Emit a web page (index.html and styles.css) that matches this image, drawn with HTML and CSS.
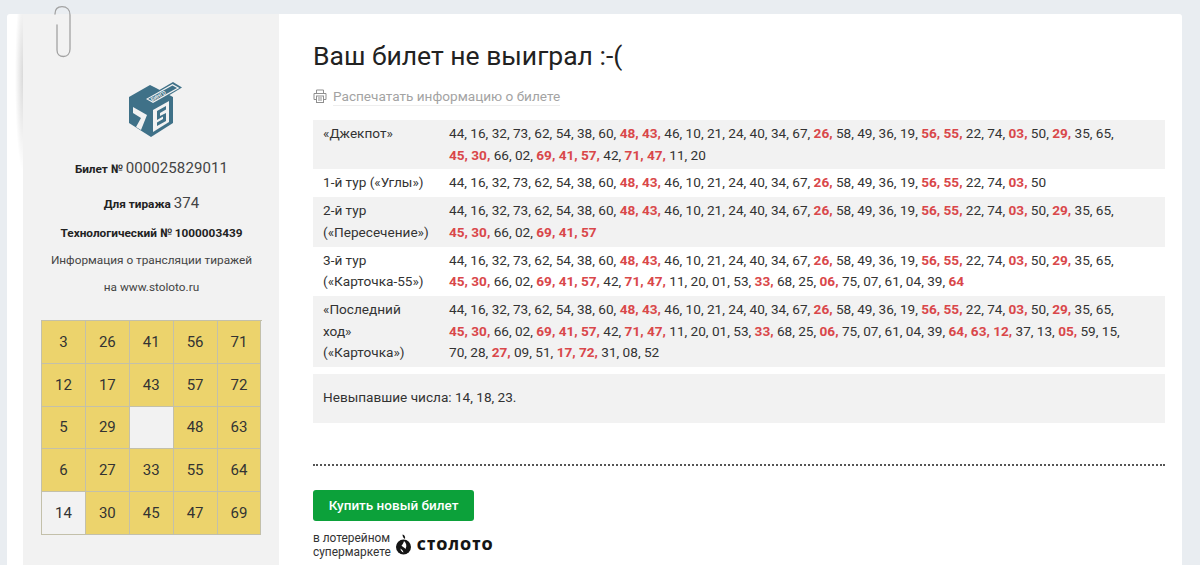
FILE: index.html
```html
<!DOCTYPE html>
<html lang="en">

<head>
    <meta charset="UTF-8">
    <meta name="viewport" content="width=device-width, initial-scale=1.0">
    <title>Ваш билет не выиграл</title>
    <link rel="stylesheet" href="styles.css">
</head>

<body>
    <div class="page">
        <div class="ticket">
            <svg class="clip" width="18" height="52" viewBox="0 0 18 52">
                <path d="M1 8 C1 3 4 0.7 8 0.7 C13 0.7 16 4 16 9 V43 C16 48 13 50.5 9.5 50.5 C5.5 50.5 3 48 3 44 V19" fill="none" stroke="#a2a2a2" stroke-width="1.3" stroke-linecap="round"/>
            </svg>
            <svg class="logo" width="56" height="56" viewBox="8 6 56 56">
                <path d="M9 21 L30 9 L36 12 L53 21 V47 L31 61 L9 47 Z" fill="#3f7188"/>
                <path d="M24 23 L53 6 L62 11.5 L33 29 Z" fill="#3f7188"/>
                <path d="M26 23 L52.5 8 L59.5 12 L33 27 Z" fill="#f2f2f2"/>
                <path d="M28 23 L52.5 9.5 L57 12 L33 25.5 Z" fill="#3f7188"/>
                <text class="logo-tag" x="32" y="25.5" transform="rotate(-29 32 25.5)">БИНГО</text>
                <path d="M33 34 L49 25 V46 L33 56 Z" fill="#f2f2f2"/>
                <path d="M37 35 L46 30 V33.5 L40 37 V40 L46 37 V45 L37 50 V46.5 L43 43 V40.5 L37 44 Z" fill="#3f7188"/>
                <path d="M13 31 L27 39 L21 54 L16 51 L21 42 L13 37 Z" fill="#f2f2f2"/>
            </svg>
            <p class="info first"><b>Билет №</b> <span class="big">000025829011</span></p>
            <p class="info draw"><b>Для тиража</b> <span class="big">374</span></p>
            <p class="info"><b>Технологический № 1000003439</b></p>
            <p class="info">Информация о трансляции тиражей</p>
            <p class="info">на www.stoloto.ru</p>
            <div class="grid">
                <div class="hit">3</div><div class="hit">26</div><div class="hit">41</div><div class="hit">56</div><div class="hit">71</div>
                <div class="hit">12</div><div class="hit">17</div><div class="hit">43</div><div class="hit">57</div><div class="hit">72</div>
                <div class="hit">5</div><div class="hit">29</div><div></div><div class="hit">48</div><div class="hit">63</div>
                <div class="hit">6</div><div class="hit">27</div><div class="hit">33</div><div class="hit">55</div><div class="hit">64</div>
                <div>14</div><div class="hit">30</div><div class="hit">45</div><div class="hit">47</div><div class="hit">69</div>
            </div>
        </div>

        <div class="main">
            <h1>Ваш билет не выиграл :-(</h1>
            <div class="print">
                <svg width="14" height="14" viewBox="0 0 14 14" fill="none" stroke="#8f8f8f" stroke-width="1">
                    <path d="M3.5 4 V1 H10.5 V4 M3 10.5 H1 V4.5 H13 V10.5 H11"/>
                    <rect x="3.5" y="7" width="7" height="6.5"/>
                    <path d="M5 9 H9 M5 11 H9"/>
                </svg>
                <span class="print-link">Распечатать информацию о билете</span>
            </div>

            <table class="tours">
                <tr class="odd">
                    <td class="name">«Джекпот»</td>
                    <td>44, 16, 32, 73, 62, 54, 38, 60, <b>48, 43,</b> 46, 10, 21, 24, 40, 34, 67, <b>26,</b> 58, 49, 36, 19, <b>56, 55,</b> 22, 74, <b>03,</b> 50, <b>29,</b> 35, 65,<br><b>45, 30,</b> 66, 02, <b>69, 41, 57,</b> 42, <b>71, 47,</b> 11, 20</td>
                </tr>
                <tr>
                    <td class="name">1-й тур («Углы»)</td>
                    <td>44, 16, 32, 73, 62, 54, 38, 60, <b>48, 43,</b> 46, 10, 21, 24, 40, 34, 67, <b>26,</b> 58, 49, 36, 19, <b>56, 55,</b> 22, 74, <b>03,</b> 50</td>
                </tr>
                <tr class="odd">
                    <td class="name">2-й тур («Пересечение»)</td>
                    <td>44, 16, 32, 73, 62, 54, 38, 60, <b>48, 43,</b> 46, 10, 21, 24, 40, 34, 67, <b>26,</b> 58, 49, 36, 19, <b>56, 55,</b> 22, 74, <b>03,</b> 50, <b>29,</b> 35, 65,<br><b>45, 30,</b> 66, 02, <b>69, 41, 57</b></td>
                </tr>
                <tr>
                    <td class="name">3-й тур («Карточка-55»)</td>
                    <td>44, 16, 32, 73, 62, 54, 38, 60, <b>48, 43,</b> 46, 10, 21, 24, 40, 34, 67, <b>26,</b> 58, 49, 36, 19, <b>56, 55,</b> 22, 74, <b>03,</b> 50, <b>29,</b> 35, 65,<br><b>45, 30,</b> 66, 02, <b>69, 41, 57,</b> 42, <b>71, 47,</b> 11, 20, 01, 53, <b>33,</b> 68, 25, <b>06,</b> 75, 07, 61, 04, 39, <b>64</b></td>
                </tr>
                <tr class="odd">
                    <td class="name">«Последний<br>ход»<br>(«Карточка»)</td>
                    <td>44, 16, 32, 73, 62, 54, 38, 60, <b>48, 43,</b> 46, 10, 21, 24, 40, 34, 67, <b>26,</b> 58, 49, 36, 19, <b>56, 55,</b> 22, 74, <b>03,</b> 50, <b>29,</b> 35, 65,<br><b>45, 30,</b> 66, 02, <b>69, 41, 57,</b> 42, <b>71, 47,</b> 11, 20, 01, 53, <b>33,</b> 68, 25, <b>06,</b> 75, 07, 61, 04, 39, <b>64, 63, 12,</b> 37, 13, <b>05,</b> 59, 15,<br>70, 28, <b>27,</b> 09, 51, <b>17, 72,</b> 31, 08, 52</td>
                </tr>
            </table>

            <div class="missed">Невыпавшие числа: 14, 18, 23.</div>

            <div class="dots"></div>

            <button class="buy" type="button">Купить новый билет</button>

            <div class="market">
                <span class="market-text">в лотерейном<br>супермаркете</span>
                <svg width="15" height="21" viewBox="0 0 15 21">
                    <circle cx="7.5" cy="13" r="7.5" fill="#151515"/>
                    <path d="M6.5 0.5 C8.5 1 9.5 2.5 9 5 C7.5 4.5 6.5 2.5 6.5 0.5 Z" fill="#151515"/>
                    <path d="M8 7 C10.5 9 11 12 9.5 15 C8.5 13 6.5 13.5 5.5 11.5 C6.5 11 7.5 9 8 7 Z M4.5 14.5 C5.5 15.5 7 16 7.5 18.5 C6 18 4.5 16.5 4.5 14.5 Z" fill="#fff"/>
                </svg>
                <span class="brand">СТОЛОТО</span>
            </div>
        </div>
    </div>
</body>

</html>
```

FILE: styles.css
```css
* {
    box-sizing: border-box;
}

body {
    margin: 0;
    height: 565px;
    overflow: hidden;
    background-color: #e9edf1;
    font-family: Roboto, "Liberation Sans", sans-serif;
    font-size: 13.6px;
    color: #333;
}

.page {
    display: flex;
    width: 1175px;
    height: 551px;
    margin: 14px 0 0 7px;
    padding-left: 16px;
    background-color: #fff;
    border-radius: 3px 3px 0 0;
}

/* left ticket column */
.ticket {
    position: relative;
    flex: 0 0 256px;
    padding: 68px 17px 0 18px;
    background-color: #f2f2f2;
    text-align: center;
}

/* curled paper shadow */
.ticket::before {
    content: "";
    position: absolute;
    top: 0;
    left: -8px;
    width: 8px;
    height: 165px;
    background: radial-gradient(ellipse 8px 95px at 100% 62px, rgba(0, 0, 0, 0.15), rgba(0, 0, 0, 0));
}

.clip {
    position: absolute;
    top: -8px;
    left: 31px;
}

.logo {
    display: block;
    margin: 0 0 17px 87px;
}

.logo-tag {
    font-size: 5px;
    font-weight: 700;
    fill: #f2f2f2;
}

.info {
    margin: 0;
    height: 27px;
    line-height: 27px;
    font-size: 11.8px;
    color: #444;
    white-space: nowrap;
}

.info.first {
    margin-bottom: 8px;
}

.info.draw {
    margin-bottom: 3px;
}

.info b {
    color: #222;
    font-weight: 700;
}

.big {
    font-size: 15px;
    letter-spacing: 0.1px;
    color: #444;
}

.grid {
    display: grid;
    grid-template-columns: repeat(5, 43.9px);
    grid-auto-rows: 42.8px;
    width: 220.5px;
    margin-top: 19px;
    border-top: 1px solid #c3c0aa;
    border-left: 1px solid #c3c0aa;
}

.grid div {
    display: flex;
    align-items: center;
    justify-content: center;
    border-right: 1px solid #c3c0aa;
    border-bottom: 1px solid #c3c0aa;
    font-size: 15px;
    color: #333;
}

.grid .hit {
    background-color: #ecd36c;
}

/* right part */
.main {
    flex: 1;
    padding: 25px 17px 0 34px;
}

h1 {
    margin: 0;
    font-size: 26.5px;
    font-weight: 400;
    line-height: 34px;
    color: #222;
}

.print {
    display: flex;
    align-items: center;
    gap: 6px;
    margin-top: 13px;
    height: 20px;
    color: #a3a3a3;
}

.print-link {
    border-bottom: 1px solid #eee;
    line-height: 18px;
}

.tours {
    width: 100%;
    margin-top: 14px;
    border-collapse: collapse;
    line-height: 21.5px;
    table-layout: fixed;
}

.tours td {
    padding: 3px 0 3.4px;
    vertical-align: top;
}

.tours .name {
    width: 136px;
    padding-left: 10px;
    padding-right: 10px;
}

.tours tr.odd {
    background-color: #f2f2f2;
}

.tours b {
    color: #d9474a;
    font-weight: 700;
}

.missed {
    height: 49px;
    margin-top: 7px;
    padding: 13px 10px 0;
    line-height: 21px;
    background-color: #f2f2f2;
}

.dots {
    margin-top: 41px;
    border-top: 2px dotted #555;
}

.buy {
    display: block;
    width: 161px;
    height: 31px;
    margin-top: 24px;
    padding: 0;
    background-color: #0ca13a;
    border: 0;
    border-radius: 3px;
    color: #fff;
    font-family: inherit;
    font-size: 13.5px;
    font-weight: 500;
    cursor: pointer;
}

.market {
    display: flex;
    align-items: center;
    gap: 5px;
    margin-top: 10px;
}

.market-text {
    font-size: 11.9px;
    line-height: 14px;
}

.brand {
    margin-left: 1px;
    font-family: "Open Sans", sans-serif;
    font-size: 14px;
    font-weight: 800;
    letter-spacing: 1px;
    color: #151515;
}
```
